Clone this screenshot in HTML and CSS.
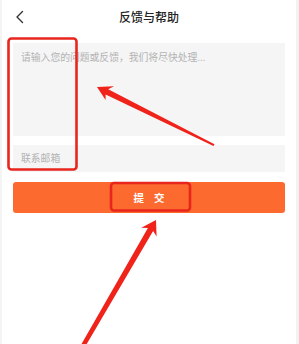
FILE: index.html
```html
<!DOCTYPE html>
<html lang="zh">
<head>
<meta charset="utf-8">
<title>反馈与帮助</title>
<link rel="stylesheet" href="styles.css">
</head>
<body>
<div class="page">
  <header class="bar">
    <span class="back">
      <svg width="10" height="14" viewBox="0 0 10 14"><polyline points="7.5,1.5 2,7 7.5,12.5" fill="none" stroke="#333" stroke-width="1.4" stroke-linecap="round" stroke-linejoin="round"/></svg>
    </span>
    <h1 class="title">反馈与帮助</h1>
    <span></span>
  </header>
  <main class="form">
    <div class="field area">请输入您的问题或反馈，我们将尽快处理...</div>
    <div class="field line">联系邮箱</div>
    <div class="submit">提交</div>
  </main>
  <svg class="marks" width="299" height="344" viewBox="0 0 299 344">
    <rect x="8.5" y="38.5" width="68" height="131" rx="3" fill="none" stroke="#e8261d" stroke-width="2.6"/>
    <rect x="111" y="183" width="79" height="27.5" rx="3" fill="none" stroke="#e8261d" stroke-width="2.6"/>
    <polygon fill="#f0231b" points="97,87 114,86.2 108.2,89.2 214.5,144.2 213.5,146 105.6,94.6 105.6,100"/>
    <polygon fill="#f0231b" points="156,220 156.6,236.5 153.1,231 65,381 61.5,379 147.9,228 141.3,227.7"/>
  </svg>
</div>
</body>
</html>
```
FILE: styles.css
```css
html, body {
  margin: 0;
  padding: 0;
  background: #fff;
}
body {
  font-family: "Noto Sans CJK SC", "Noto Sans", sans-serif;
}
.page {
  position: relative;
  width: 299px;
  height: 344px;
  overflow: hidden;
  background: #fff;
  box-sizing: border-box;
  border-left: 2px solid #f4f4f4;
  border-right: 3px solid #f2f2f2;
}
.bar {
  display: grid;
  grid-template-columns: 40px 1fr 40px;
  align-items: center;
  height: 34px;
}
.back {
  display: flex;
  align-items: center;
  padding-left: 13px;
  height: 34px;
}
.title {
  margin: 0;
  text-align: center;
  font-size: 12px;
  font-weight: 500;
  color: #222;
  line-height: 34px;
}
.form {
  display: flex;
  flex-direction: column;
  padding: 9px 11px 0 11px;
}
.field {
  background: #f5f5f5;
  color: #b3b3b3;
  font-size: 9.8px;
  padding-left: 8px;
  box-sizing: border-box;
}
.area {
  height: 93px;
  padding-top: 7px;
  line-height: 14px;
}
.line {
  margin-top: 9px;
  height: 27px;
  line-height: 27px;
}
.submit {
  margin-top: 10px;
  height: 31px;
  border-radius: 3px;
  background: #fd6a2f;
  color: #fff;
  font-size: 10.5px;
  font-weight: 700;
  letter-spacing: 10px;
  text-indent: 10px;
  text-align: center;
  line-height: 31px;
}
.marks {
  position: absolute;
  top: 0;
  left: -2px;
  pointer-events: none;
}
```
